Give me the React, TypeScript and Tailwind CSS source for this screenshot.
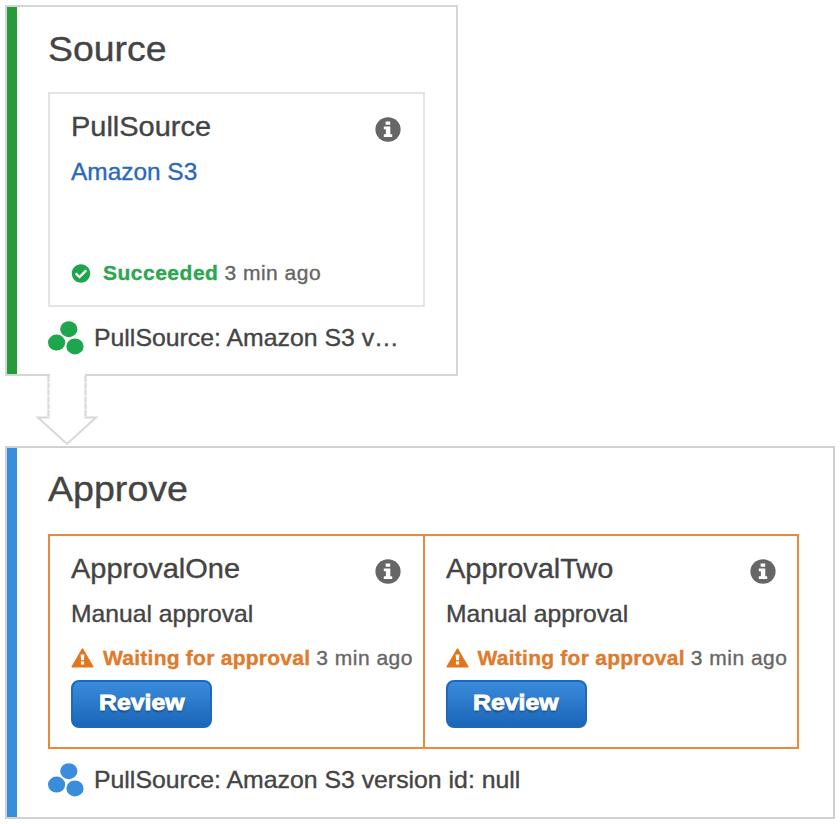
import React from "react";
import { FaCheckCircle } from "react-icons/fa";

function InfoIcon() {
  return (
    <svg className="relative top-[3px]" width="26" height="25" viewBox="0 0 26 25">
      <ellipse cx="13" cy="12.5" rx="12.6" ry="12.2" fill="#666" />
      <path d="M10.6 4.4h4.6v3.3h-4.6zM8.8 9.6h6.5v7.6h1.9v2.8H8.8v-2.8h2.1v-4.9H8.8z" fill="#fff" />
    </svg>
  );
}

function WarningIcon() {
  return (
    <svg width="23" height="20" viewBox="0 0 23 20">
      <path d="M11.5 1.2 L21.8 18.8 H1.2 Z" fill="#e0761f" stroke="#e0761f" strokeWidth="1.6" strokeLinejoin="round" />
      <path d="M9.6 6.6h3.8l-.5 5.6h-2.8zM9.9 13.6h3.2v2.8H9.9z" fill="#fff" />
    </svg>
  );
}

function Revisions({ className }: { className: string }) {
  return (
    <svg className={className} width="36" height="34" viewBox="0 0 36 34" fill="currentColor">
      <ellipse cx="20.8" cy="8.2" rx="8.6" ry="8" />
      <ellipse cx="8.6" cy="21.6" rx="8.6" ry="8" />
      <ellipse cx="27" cy="25.4" rx="8.6" ry="8" />
    </svg>
  );
}

function CardHead({ title }: { title: string }) {
  return (
    <div className="flex h-12 items-center justify-between">
      <h3 className="origin-left scale-x-[1.065] pt-[2px] text-[27.2px] leading-[48px]">{title}</h3>
      <InfoIcon />
    </div>
  );
}

function ApprovalCard({ title, className }: { title: string; className: string }) {
  return (
    <div className={`h-[215px] border-2 border-[#e88a3c] pt-2 ${className}`}>
      <div className="w-[330px]">
        <CardHead title={title} />
      </div>
      <p className="w-[300px] origin-left scale-x-[1.045] text-[23.6px] leading-[44px]">Manual approval</p>
      <div className="flex h-11 items-center whitespace-nowrap text-[21px]">
        <WarningIcon />
        <span className="ml-[9px] font-bold tracking-[0.25px] text-[#e07a2c]">Waiting for approval</span>
        <span className="ml-[6px] tracking-[0.5px] text-[#666]">3 min ago</span>
      </div>
      <button className="flex h-12 w-[141px] items-center justify-center rounded-[8px] border-2 border-[#1f69bb] bg-gradient-to-b from-[#3a8bdd] to-[#1a66b8] pb-[3px] text-[22.5px] font-bold text-white [-webkit-text-stroke:0.9px_white] [text-shadow:0_2px_2px_rgba(0,0,0,0.4)]">
        <span className="scale-x-[1.1]">Review</span>
      </button>
    </div>
  );
}

export default function App() {
  return (
    <main className="h-[824px] w-[840px] overflow-hidden bg-white pt-[5px] pl-[5px] font-['Liberation_Sans',Arial,sans-serif] text-[#444] [-webkit-text-stroke:0.35px_currentColor]">
      <section className="flex h-[371px] w-[453px] border-2 border-[#d6d6d6]">
        <div className="w-[10px] bg-[#259b3c]" />
        <div className="pl-[31px]">
          <h2 className="h-[85px] w-[300px] origin-left scale-x-[1.075] text-[34.8px] leading-[83px]">Source</h2>
          <div className="h-[215px] w-[377px] border-2 border-[#e4e4e4] pt-2 pl-[21px]">
            <div className="w-[330px]">
              <CardHead title="PullSource" />
            </div>
            <p className="w-[300px] origin-left scale-x-[1.035] text-[23.6px] leading-[44px] text-[#2c68b8]">Amazon S3</p>
            <div className="mt-[66px] flex h-[26px] items-center whitespace-nowrap text-[21px]">
              <FaCheckCircle className="h-[19px] w-[20px] text-[#1da64b]" />
              <span className="ml-[12px] font-bold tracking-[0.5px] text-[#2ca650]">Succeeded</span>
              <span className="ml-[6px] tracking-[0.5px] text-[#666]">3 min ago</span>
            </div>
          </div>
          <div className="flex h-[62px] items-center">
            <Revisions className="text-[#1da64b]" />
            <span className="ml-[10px] origin-left scale-x-[1.052] pt-px text-[23.6px] whitespace-nowrap">PullSource: Amazon S3 v…</span>
          </div>
        </div>
      </section>
      <svg className="relative top-[-2px] ml-[30px] block" width="64" height="72" viewBox="35 374 64 72" fill="#fff">
        <path d="M50 373H85V378H50Z" />
        <path d="M48.5 376V417.5" stroke="#dcdcdc" strokeWidth="2.4" strokeDasharray="6 0.8" />
        <path d="M85.5 376V417.5" stroke="#dcdcdc" strokeWidth="2.4" strokeDasharray="6 0.8" />
        <path d="M49.5 417.5H38L67 444L96 417.5H84.5" stroke="#d8d8d8" strokeWidth="2" />
      </svg>
      <section className="-mt-[2px] flex h-[373px] w-[830px] border-2 border-[#d0d0d0]">
        <div className="w-[10px] bg-[#3a8cdc]" />
        <div className="pl-[31px]">
          <h2 className="h-[86px] w-[300px] origin-left scale-x-[1.08] text-[34.8px] leading-[82px]">Approve</h2>
          <div className="flex">
            <ApprovalCard title="ApprovalOne" className="w-[377px] pl-[21px]" />
            <ApprovalCard title="ApprovalTwo" className="-ml-[2px] w-[376px] pl-[20.5px]" />
          </div>
          <div className="flex h-[62px] items-center">
            <Revisions className="text-[#3a8cdc]" />
            <span className="ml-[10px] origin-left scale-x-[1.052] pt-px text-[23.6px] whitespace-nowrap">PullSource: Amazon S3 version id: null</span>
          </div>
        </div>
      </section>
    </main>
  );
}
